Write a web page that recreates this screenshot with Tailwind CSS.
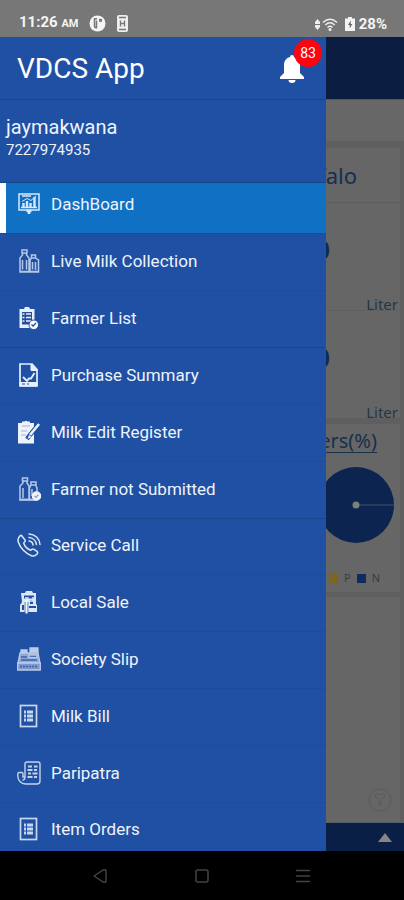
<!DOCTYPE html>
<html lang="en">
<head>
<meta charset="utf-8">
<meta name="viewport" content="width=device-width, initial-scale=1">
<title>VDCS App</title>
<script src="https://cdn.jsdelivr.net/npm/@tailwindcss/browser@4"></script>
</head>
<body class="flex h-screen flex-col overflow-hidden bg-black font-[Roboto,sans-serif]">

<header class="flex h-[37px] shrink-0 items-end justify-between bg-[#777777] pr-[17px] pb-[3px] pl-[19px] text-[15px] leading-[20px] font-bold text-[#f4f4f4]">
  <div class="flex items-center">
    <span>11:26 <span class="text-[11px]">AM</span></span>
    <svg class="ml-[11px] size-[17px]" viewBox="0 0 17 17" aria-hidden="true"><circle cx="8.5" cy="8.5" r="8" fill="#f4f4f4"/><path d="M8 3.800H5.500v7.500q0 1.500 2 1.500V5.500" fill="none" stroke="#777" stroke-width="1.500"/><path d="M10 3.800h3v3h-3z" fill="#777"/></svg>
    <svg class="ml-[11px] h-[17px] w-[11px]" viewBox="0 0 11 17" aria-hidden="true"><rect width="11" height="17" rx="2" fill="#eee"/><path d="M2 2.500h7M2 14.500h7M3.500 5.500v6M7.500 5.500v6M3.500 8.500h4" stroke="#777" stroke-width="1.300"/></svg>
  </div>
  <div class="flex items-center">
    <svg class="h-[11px] w-[5px]" viewBox="0 0 5 11" aria-hidden="true"><path d="M2.500 0L5 3v2H0V3zM0 6h5v2l-2.500 3L0 8z" fill="#eee"/></svg>
    <svg class="ml-[2px] h-[13px] w-[16px]" viewBox="0 0 16 13" fill="none" stroke="#eee" stroke-width="1.400" aria-hidden="true"><path d="M1 4.500Q8-2 15 4.500M3.300 7Q8 2.500 12.700 7M5.500 9.500Q8 7 10.500 9.500"/><circle cx="8" cy="11.500" r=".8" fill="#eee"/></svg>
    <svg class="ml-[7px] h-[14px] w-[10px]" viewBox="0 0 10 14" aria-hidden="true"><path d="M3 0h4v1.500h3V14H0V1.500h3z" fill="#f4f4f4"/><path d="M5.700 3.500L3 8h1.700v3.500L7.300 7H5.700z" fill="#666"/></svg>
    <span class="ml-[4px]">28%</span>
  </div>
</header>

<div class="relative flex min-h-0 flex-1 flex-col">

  <main class="flex flex-1 flex-col bg-[#5f5f5f] font-['Noto_Sans',sans-serif] text-[#17304a]">
    <div class="h-[62px] bg-[#0b1e42]"></div>
    <div class="h-[42px] border-t border-[#555555] bg-[#676767]"></div>
    <section class="mt-[7px] mr-[4px] h-[270px] bg-[#666666] text-right">
      <h2 class="h-[54px] pt-[11px] pr-[43px] text-[22px] leading-[32px] text-[#142f52]">Buffalo</h2>
      <div class="flex h-[108px] flex-col border-t border-[#5c5c5c] pt-[28px]">
        <p class="pr-[70px] text-[26px] leading-[36px] font-semibold text-[#112c50]">0</p>
        <p class="mt-[27px] pr-[2px] text-[15px] leading-[20px] text-[#263647]">Liter</p>
      </div>
      <div class="flex h-[108px] flex-col border-t border-[#606060] pt-[28px]">
        <p class="pr-[70px] text-[26px] leading-[36px] font-semibold text-[#112c50]">0</p>
        <p class="mt-[27px] pr-[2px] text-[15px] leading-[20px] text-[#263647]">Liter</p>
      </div>
    </section>
    <section class="mt-[6px] mr-[4px] flex h-[168px] flex-col items-end bg-[#666666]">
      <h2 class="mt-[3px] mr-[23px] text-[20px] leading-[28px] text-[#17314a] underline decoration-1 underline-offset-4">Farmers(%)</h2>
      <svg class="mt-[12px] mr-[6px] size-[76px]" viewBox="0 0 76 76" role="img" aria-label="Farmers by status"><circle cx="38" cy="38" r="38" fill="#0c2450"/><path d="M41 38h35" stroke="#46536a"/><circle cx="38" cy="38" r="3.500" fill="#7c8078"/></svg>
      <div class="mt-[25px] mr-[20px] flex items-center text-[11px] leading-[20px] text-[#353a42]">
        <span class="size-[9px] bg-[#7d6420]"></span><span class="ml-[6px]">P</span>
        <span class="ml-[6px] size-[9px] bg-[#0e2b62]"></span><span class="ml-[6px]">N</span>
      </div>
    </section>
    <section class="mt-[5px] mr-[4px] flex flex-1 items-end justify-end bg-[#666666] pr-[8px] pb-[10px]">
      <button aria-label="Filter"><svg class="block size-[24px]" viewBox="0 0 24 24" fill="none" stroke="#5a5a5a"><circle cx="12" cy="12" r="11"/><path d="M7 6h10v2l-4 4v6l-2-1v-5L7 8z"/></svg></button>
    </section>
    <footer class="flex h-[29px] items-center justify-end border-t border-[#526069] bg-[#0a1f46] pr-[12px]">
      <button aria-label="Expand"><svg class="block h-[9px] w-[14px]" viewBox="0 0 14 9"><path d="M7 0l7 9H0z" fill="#858585"/></svg></button>
    </footer>
  </main>

  <aside class="absolute inset-y-0 left-0 flex w-[326px] flex-col overflow-hidden bg-[#1f50a3] text-[#eef3fb]">
    <div class="flex h-[63px] shrink-0 items-center justify-between border-b border-[#194486] pt-[2px] pr-[21px] pl-[17px]">
      <h1 class="text-[28px] leading-[36px] text-white">VDCS App</h1>
      <button class="relative" aria-label="Notifications, 83 unread">
        <svg class="block h-[28px] w-[26px]" viewBox="0 0 26 28" fill="#fff"><path d="M11 2a2 2 0 0 1 4 0c4 1 6 4 6 8v8l4 4v2H1v-2l4-4v-8c0-4 2-7 6-8zM9.500 25h7a3.500 3 0 0 1-7 0z"/></svg>
        <span class="absolute -top-[16px] left-[15px] flex size-[28px] items-center justify-center rounded-full bg-[#fb0510] text-[14px] text-white">83</span>
      </button>
    </div>
    <div class="h-[83px] shrink-0 border-b border-[#174489] pt-[15px] pl-[6px]">
      <p class="text-[20px] leading-[24px]">jaymakwana</p>
      <p class="text-[15px] leading-[22px]">7227974935</p>
    </div>
    <nav class="flex min-h-0 flex-1 flex-col text-[17px] leading-[24px]">
      <a href="#" class="flex h-[50px] shrink-0 items-center gap-[10px] border-l-[6px] border-white bg-[#0f70c4] pb-[8px] pl-[11px]">
        <svg class="size-[24px]" viewBox="0 0 24 24" fill="none" stroke="#dce8f8" stroke-width="1.500" aria-hidden="true"><rect x="2" y="2" width="20" height="16"/><path d="M5 4h9M4 15.500h16"/><path d="M6.500 15v-4M10 15V9M13.500 15v-4M17.500 15V5" stroke-width="2.400"/><path d="M5 9.500l5-3 4 2 5-4.500" stroke-width="1"/><path d="M12 18v4M9.500 19h5" stroke-width="2.500"/></svg>DashBoard</a>
      <a href="#" class="flex flex-1 items-center gap-[10px] border-t border-[#1c4a98] pb-[2px] pl-[17px]">
        <svg class="size-[24px]" viewBox="0 0 24 24" fill="none" stroke="#b6c8e7" stroke-width="1.500" aria-hidden="true"><path d="M5 1h5v3H5zM5.500 4v2L3 9v14h9V9L9.500 6V4M14.500 6h4v3h-4zM14.500 9L13 11v12h8.500V11L18.500 9M5.500 11v9.500M9.500 11v9.500M15.500 13v7.500M18.500 13v8M3 22.500h18"/></svg>Live Milk Collection</a>
      <a href="#" class="flex flex-1 items-center gap-[10px] border-t border-[#1d4c9b] pb-[2px] pl-[17px]">
        <svg class="size-[24px]" viewBox="0 0 24 24" fill="none" aria-hidden="true"><path d="M2.500 3h4.500l1-2h4l1 2h4.500v19h-15z" fill="#e8f0fb"/><path d="M5 6h10v12.500H5z" fill="#284f98"/><path d="M5.500 8h2M9 8h5M5.500 11.500h2M9 11.500h5M5.500 15h2M9 15h5" stroke="#e8f0fb" stroke-width="1.700"/><circle cx="16.800" cy="18.800" r="4.800" fill="#fff" stroke="#1f50a3"/><path d="M14.500 18.500l1.500 1.500 3-3" stroke="#1f50a3" stroke-width="1.300"/></svg>Farmer List</a>
      <a href="#" class="flex flex-1 items-center gap-[10px] border-t border-[#1a468f] pb-[2px] pl-[17px]">
        <svg class="size-[24px]" viewBox="0 0 24 24" fill="none" stroke="#e8f0fb" aria-hidden="true"><path d="M3 1h12l5 5.500V23H3z" stroke-width="1.700"/><path d="M14 1v6.500h6z" fill="#e8f0fb"/><path d="M3 19.500h17v3.500H3z" fill="#e8f0fb"/><path d="M6 14l4 4 2-2.500h2L17.500 10" stroke-width="1.800"/><path d="M5 21h3M10 21h2" stroke="#1f50a3"/></svg>Purchase Summary</a>
      <a href="#" class="flex flex-1 items-center gap-[10px] border-t border-[#1d4c9b] pb-[2px] pl-[17px]">
        <svg class="size-[24px]" viewBox="0 0 24 24" fill="none" aria-hidden="true"><path d="M1 3h4V1.500h2.500a2 2 0 0 1 3 0H13V3h4v20.500H1z" fill="#eef3fb"/><path d="M5 6h8M4 11h6M4 15h5" stroke="#9fb4db"/><path d="M22 4L13 15l-3 4" stroke="#1f50a3" stroke-width="4.500"/><path d="M22 4L13 15" stroke="#eef3fb" stroke-width="2.600"/><path d="M12 15l-1.500 4 4-2z" fill="#eef3fb"/></svg>Milk Edit Register</a>
      <a href="#" class="flex flex-1 items-center gap-[10px] border-t border-[#1d4c9b] pb-[2px] pl-[17px]">
        <svg class="size-[24px]" viewBox="0 0 24 24" fill="none" stroke="#b6c8e7" stroke-width="1.500" aria-hidden="true"><path d="M5.500 1h5v3h-5zM6 4v2L3 9v14h9V9l-2-3V4M14 5h5v3h-5zM14 8l-1.500 3v12H20V11l-1.500-3M6 11v10M15 12v7"/><path d="M2.500 22.500H20" stroke-width="1.800"/><circle cx="19.500" cy="19" r="4" fill="#eef3fb" stroke="#eef3fb"/><path d="M17.500 19l1.500 1.300 2.300-2.500" stroke="#8ea7d5"/></svg>Farmer not Submitted</a>
      <a href="#" class="flex flex-1 items-center gap-[10px] border-t border-[#1a468f] pb-[2px] pl-[17px]">
        <svg class="size-[24px]" viewBox="0 0 24 24" fill="none" stroke="#dce6f6" stroke-width="1.500" stroke-linecap="round" stroke-linejoin="round" aria-hidden="true"><path d="M4.500 2.500L8 7c.8 1-.2 2-1.300 3 .8 3 3.800 6 7 7.300 1-1.300 2-1.800 3.300-1l3 2c1 1 .7 2-.2 2.900-1.300 1.500-3.300 2.200-5.300 1.500C8.500 20.700 3.200 15 1.300 9 .5 6.500 1.300 4.500 3 2.900c.5-.5 1-.7 1.500-.4z"/><path d="M12 1c6 .2 10.500 4.500 11 10.500M12 4.500c4 .3 7 3.200 7.400 7M12 8c2.300.2 3.800 1.700 4 4"/></svg>Service Call</a>
      <a href="#" class="flex flex-1 items-center gap-[10px] border-t border-[#1d4c9b] pb-[2px] pl-[17px]">
        <svg class="size-[24px]" viewBox="0 0 24 24" fill="none" aria-hidden="true"><path d="M4 3h4l1-2h6l1 2h3v11l1 1v7H3v-7l2-3z" fill="#dce6f6"/><path d="M7 5.500h10v3H7zM13 10h3v4h-3zM12 16h7v2h-7zM5 15h2v5H5z" fill="#1f50a3"/><path d="M8 8h3v3h5V7" stroke="#dce6f6" stroke-width="1.500"/><path d="M9.500 12v10" stroke="#1f50a3" stroke-width="3.600"/><path d="M9.500 10v13.500" stroke="#f2f6fc" stroke-width="2.200"/></svg>Local Sale</a>
      <a href="#" class="flex flex-1 items-center gap-[10px] border-t border-[#1d4c9b] pb-[2px] pl-[17px]">
        <svg class="size-[24px]" viewBox="0 0 24 24" fill="none" stroke="#bccbe7" stroke-width="1.300" aria-hidden="true"><path d="M3 6h18l2 10H1z" fill="#8fa8d5"/><path d="M.7 16h22.600v7H.7z" fill="#7d98cc"/><path d="M4 6V3h6v3M13 1h8v4h-8z" fill="#bccbe7"/><path d="M12 8h8v2.500h-8z" fill="#1f50a3"/><path d="M4 10h6M4 13h16" stroke="#3c64ad"/><path d="M3 19.500h18" stroke="#3c64ad" stroke-dasharray="2 1"/></svg>Society Slip</a>
      <a href="#" class="flex flex-1 items-center gap-[10px] border-t border-[#1d4c9b] pb-[2px] pl-[17px]">
        <svg class="size-[24px]" viewBox="0 0 24 24" fill="none" stroke="#c9d7ee" aria-hidden="true"><rect x="3.500" y="1.500" width="16" height="21" stroke-width="1.700"/><path d="M7 8h2M10 8h6M7 12h2M10 12h6M7 16h2M10 16h6" stroke-width="2.800"/></svg>Milk Bill</a>
      <a href="#" class="flex flex-1 items-center gap-[10px] border-t border-[#1d4c9b] pb-[2px] pl-[17px]">
        <svg class="size-[24px]" viewBox="0 0 24 24" fill="none" stroke="#c4d3ec" stroke-width="1.400" aria-hidden="true"><path d="M8 16V3q0-2 2-2h11q2 0 2 2v17q0 3-3 3H8.500C4 23 .8 19 .8 15v-2q0-1.500 1.500-1.500H5q1 0 1 1.500v3h2"/><path d="M11 5.500h4M17 5.500h3.500M10.500 9h5M17 9h3M11 12.500h3M15.500 12.500h5M10.500 16h5M17 16h3" stroke-width="1.900"/><path d="M8 16q0 3-2.500 3"/></svg>Paripatra</a>
      <a href="#" class="flex h-[49px] shrink-0 items-start gap-[10px] border-t border-[#1d4c9b] pt-[14px] pl-[17px]">
        <svg class="size-[24px]" viewBox="0 0 24 24" fill="none" stroke="#c9d7ee" aria-hidden="true"><rect x="3.500" y="1.500" width="16" height="21" stroke-width="1.700"/><path d="M7 8h2M10 8h6M7 12h2M10 12h6M7 16h2M10 16h6" stroke-width="2.800"/></svg>Item Orders</a>
    </nav>
  </aside>
</div>

<div class="grid h-[49px] shrink-0 grid-cols-3 items-center bg-black px-[50px] text-[#434343]">
  <button class="flex justify-center" aria-label="Back"><svg class="size-[16px]" viewBox="0 0 16 16" fill="none" stroke="currentColor" stroke-width="1.500" stroke-linejoin="round"><path d="M1 8l9-6q3-1 3 1v10q0 2-3 1z"/></svg></button>
  <button class="flex justify-center" aria-label="Home"><svg class="size-[16px]" viewBox="0 0 16 16" fill="none" stroke="currentColor" stroke-width="1.500"><rect x="2" y="2" width="12" height="12" rx="1.500"/></svg></button>
  <button class="flex justify-center" aria-label="Recent apps"><svg class="size-[16px]" viewBox="0 0 16 16" stroke="currentColor" stroke-width="1.500"><path d="M1 2.500h14M1 8h14M1 13.500h14"/></svg></button>
</div>

</body>
</html>
